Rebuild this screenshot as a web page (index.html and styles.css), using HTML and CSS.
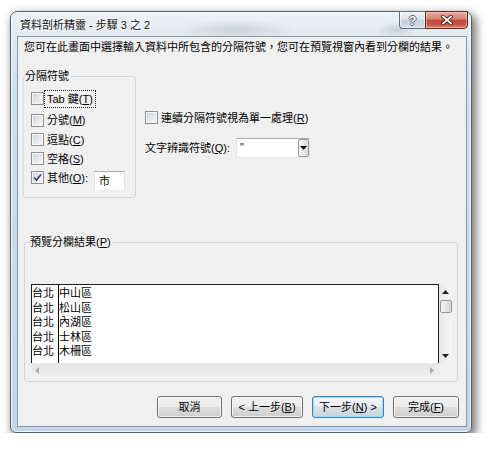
FILE: index.html
```html
<!DOCTYPE html>
<html lang="zh-Hant">
<head>
<meta charset="utf-8">
<title>資料剖析精靈</title>
<link rel="stylesheet" href="styles.css">
</head>
<body>
<div class="window">
  <div class="titlebar">
    <div class="title">資料剖析精靈 - 步驟 3 之 2</div>
    <div class="caps">
      <div class="cap help"><span class="q">?</span></div>
      <div class="cap close">
        <svg width="12" height="10" viewBox="0 0 12 10">
          <path d="M2 1.5 L10 8.5 M10 1.5 L2 8.5" stroke="#3a1a16" stroke-width="3.6" stroke-linecap="square" fill="none"/>
          <path d="M2 1.5 L10 8.5 M10 1.5 L2 8.5" stroke="#ffffff" stroke-width="1.8" stroke-linecap="square" fill="none"/>
        </svg>
      </div>
    </div>
  </div>
  <div class="client">
    <p class="intro">您可在此畫面中選擇輸入資料中所包含的分隔符號，您可在預覽視窗內看到分欄的結果。</p>
    <div class="top">
      <fieldset class="group delims">
        <legend>分隔符號</legend>
        <div class="chk r1"><span class="box"></span><span class="lbl focus">Tab 鍵(<u>T</u>)</span></div>
        <div class="chk r2"><span class="box"></span><span class="lbl">分號(<u>M</u>)</span></div>
        <div class="chk"><span class="box"></span><span class="lbl">逗點(<u>C</u>)</span></div>
        <div class="chk"><span class="box"></span><span class="lbl">空格(<u>S</u>)</span></div>
        <div class="chk"><span class="box checked"><svg width="11" height="11" viewBox="0 0 11 11"><path d="M2 5.5 L4.5 8 L9 2.5" stroke="#34487a" stroke-width="1.7" fill="none"/></svg></span><span class="lbl">其他(<u>O</u>):</span><span class="edit">市</span></div>
      </fieldset>
      <div class="options">
        <div class="chk"><span class="box"></span><span class="lbl">連續分隔符號視為單一處理(<u>R</u>)</span></div>
        <div class="qual">
          <span class="qlbl">文字辨識符號(<u>Q</u>):</span>
          <div class="combo">
            <span class="val">"</span>
            <span class="drop"><svg width="7" height="4" viewBox="0 0 7 4"><path d="M0 0 H7 L3.5 4 Z" fill="#000"/></svg></span>
          </div>
        </div>
      </div>
    </div>
    <fieldset class="group preview">
      <legend>預覽分欄結果(<u>P</u>)</legend>
      <div class="grid">
        <div class="data">
          <div class="col c1">
            <div>台北</div><div>台北</div><div>台北</div><div>台北</div><div>台北</div>
          </div>
          <div class="col c2">
            <div>中山區</div><div>松山區</div><div>內湖區</div><div>士林區</div><div>木柵區</div>
          </div>
        </div>
        <div class="vscroll">
          <div class="arr"><svg width="7" height="4" viewBox="0 0 7 4"><path d="M0 4 H7 L3.5 0 Z" fill="#222"/></svg></div>
          <div class="thumb"></div>
          <div class="track"></div>
          <div class="arr"><svg width="7" height="4" viewBox="0 0 7 4"><path d="M0 0 H7 L3.5 4 Z" fill="#222"/></svg></div>
        </div>
        <div class="hscroll">
          <svg width="4" height="7" viewBox="0 0 4 7"><path d="M4 0 V7 L0 3.5 Z" fill="#adadad"/></svg>
          <svg width="4" height="7" viewBox="0 0 4 7"><path d="M0 0 V7 L4 3.5 Z" fill="#adadad"/></svg>
        </div>
        <div class="corner"></div>
      </div>
    </fieldset>
    <div class="buttons">
      <div class="btn w65">取消</div>
      <div class="btn w72">&lt; 上一步(<u>B</u>)</div>
      <div class="btn w72 default">下一步(<u>N</u>) &gt;</div>
      <div class="btn w66">完成(<u>F</u>)</div>
    </div>
  </div>
</div>
</body>
</html>
```
FILE: styles.css
```css
* { box-sizing: border-box; }
html, body { margin: 0; padding: 0; background: #ffffff; }
body {
  font-family: "Liberation Sans", "Noto Sans CJK TC", sans-serif;
  font-size: 11px;
  color: #000;
}
u { text-decoration: underline; text-underline-offset: 1px; }

.window {
  margin: 11px 0 0 10px;
  width: 462px;
  height: 422px;
  border: 1px solid #4f5d6d;
  border-radius: 7px 7px 6px 6px;
  padding: 0 4px 5px 6px;
  background:
    radial-gradient(ellipse 60px 10px at 225px 18px, rgba(120,135,150,0.25), rgba(120,135,150,0) 100%),
    radial-gradient(ellipse 20px 8px at 385px 18px, rgba(120,135,150,0.25), rgba(120,135,150,0) 100%),
    linear-gradient(to bottom, #edf1f5 0px, #e3eaf1 22px, #cfdfef 80px, #bed6ee 100%);
  box-shadow: inset 0 0 0 1px rgba(255,255,255,0.8), 3px 4px 10px 1px rgba(0,0,0,0.55);
  display: flex;
  flex-direction: column;
}

.titlebar {
  flex: none;
  height: 24px;
  display: flex;
  align-items: flex-start;
}
.title {
  flex: 1;
  padding: 7px 0 0 3px;
  line-height: 13px;
  color: #111;
  text-shadow: 0 0 5px #fff, 0 0 3px #fff;
}
.caps {
  display: flex;
  margin: -1px -1px 0 0;
}
.cap {
  height: 18px;
  display: flex;
  align-items: center;
  justify-content: center;
}
.help {
  width: 26px;
  border: 1px solid #5e6e80;
  border-right: none;
  border-radius: 0 0 0 4px;
  background: linear-gradient(#eef2f7 0%, #dde5ee 45%, #c4d0dd 50%, #d4dee9 100%);
  box-shadow: inset 0 0 0 1px rgba(255,255,255,0.6);
}
.q {
  font-family: "Liberation Sans", sans-serif;
  font-weight: bold;
  font-size: 13px;
  line-height: 13px;
  color: #f4f6f8;
  text-shadow: 1px 0 0 #5b6b7c, -1px 0 0 #5b6b7c, 0 1px 0 #5b6b7c, 0 -1px 0 #5b6b7c;
}
.close {
  width: 43px;
  border: 1px solid #5a2822;
  border-radius: 0 0 4px 0;
  background: linear-gradient(#e8aa9f 0%, #d98475 45%, #c5493a 50%, #c95443 80%, #dd8a70 100%);
  box-shadow: inset 0 0 0 1px rgba(255,220,210,0.5);
}

.client {
  flex: none;
  height: 391px;
  border: 1px solid #8798ab;
  background: #f0f0f0;
}

.intro {
  margin: 0;
  padding: 4px 0 0 6px;
  line-height: 13px;
  white-space: nowrap;
}

.top {
  display: flex;
  align-items: flex-start;
  margin: 16px 0 0 5px;
}

fieldset.group {
  border: 1px solid #d0d7de;
  border-radius: 3px;
  min-width: 0;
}
fieldset.group legend {
  padding: 0 2px 0 0;
  line-height: 13px;
}

fieldset.delims {
  margin: 0;
  width: 113px;
  padding: 4px 0 10px 1px;
}

.chk {
  display: flex;
  align-items: center;
  height: 19px;
}
.delims .chk { margin-left: 6px; }
.delims .r1 { height: 23px; }
.delims .r2 { height: 20px; }

.box {
  flex: none;
  width: 13px;
  height: 13px;
  border: 1px solid #8e8f8f;
  background: linear-gradient(135deg, #cdd1d7 0%, #e6e9ec 55%, #fafafa 100%);
  box-shadow: inset 0 0 0 1px #f6f6f6;
  display: flex;
  align-items: center;
  justify-content: center;
}
.lbl {
  margin-left: 2px;
  padding: 0 1px;
  line-height: 14px;
  white-space: nowrap;
}
.focus {
  outline: 1px dotted #222;
  outline-offset: 1px;
}

.edit {
  flex: none;
  align-self: flex-start;
  width: 31px;
  height: 20px;
  margin: 3px 0 0 5px;
  border: 1px solid;
  border-color: #abadb3 #e2e3ea #e3e9ef #e2e3ea;
  background: #fff;
  padding: 2px 0 0 4px;
  line-height: 14px;
}

.options {
  margin-left: 9px;
  padding-top: 38px;
}
.options .lbl { margin-left: 2px; }
.qual {
  display: flex;
  align-items: center;
  height: 20px;
  margin-top: 11px;
}
.qlbl {
  width: 91px;
  line-height: 14px;
  white-space: nowrap;
}
.combo {
  display: flex;
  width: 74px;
  height: 20px;
  border: 1px solid;
  border-color: #abadb3 #e2e3ea #e3e9ef #e2e3ea;
  background: #fff;
}
.combo .val {
  flex: 1;
  padding: 1px 0 0 3px;
  line-height: 14px;
}
.drop {
  width: 11px;
  border: 1px solid #9a9a9a;
  border-radius: 2px;
  background: linear-gradient(to right, #f5f5f5, #dadada);
  display: flex;
  align-items: center;
  justify-content: center;
}

fieldset.preview {
  width: 434px;
  margin: 38px 0 0 6px;
  padding: 0 5px 4px 5px;
}
.grid {
  margin: 35px 0 0 1px;
  display: grid;
  grid-template-columns: 408px 13px;
  grid-template-rows: 79px 14px;
}
.data {
  display: flex;
  overflow: hidden;
  background: #fff;
  border-top: 1px solid #202020;
  border-left: 1px solid #202020;
  border-right: 1px solid #202020;
}
.col {
  font-family: "Noto Sans CJK TC", sans-serif;
  font-size: 11px;
  line-height: 14.5px;
  white-space: nowrap;
}
.c1 {
  width: 27px;
  border-right: 1px solid #000;
}
.vscroll {
  display: flex;
  flex-direction: column;
  background: linear-gradient(to right, #e9e9e9, #f5f5f5);
}
.arr {
  flex: none;
  height: 15px;
  display: flex;
  align-items: center;
  justify-content: center;
}
.thumb {
  flex: none;
  width: 12px;
  height: 13px;
  margin: 1px 0 0 1px;
  border: 1px solid #979797;
  border-radius: 2px;
  background: linear-gradient(to right, #f6f6f6, #e2e2e2 60%, #d2d2d2);
}
.track { flex: 1; }
.hscroll {
  display: flex;
  align-items: center;
  justify-content: space-between;
  padding: 0 5px 0 4px;
  background: linear-gradient(#e6e6e6, #efefef);
}
.corner { background: #f0f0f0; }

.buttons {
  display: flex;
  justify-content: flex-end;
  gap: 9px;
  margin-top: 14px;
  padding-right: 7px;
}
.btn {
  height: 22px;
  border: 1px solid #707070;
  border-radius: 3px;
  background: linear-gradient(#f2f2f2 0%, #ebebeb 50%, #dddddd 50%, #cfcfcf 100%);
  box-shadow: inset 0 0 0 1px rgba(255,255,255,0.75);
  display: flex;
  align-items: center;
  justify-content: center;
  line-height: 13px;
  white-space: nowrap;
}
.w65 { width: 65px; }
.w66 { width: 66px; }
.w72 { width: 72px; }
.default {
  border-color: #3c7fb1;
  box-shadow: inset 0 0 0 1px #9fdcf6;
  background: linear-gradient(#f1f5f8 0%, #e8eef2 50%, #d6e0e6 50%, #cad6dd 100%);
}
```
